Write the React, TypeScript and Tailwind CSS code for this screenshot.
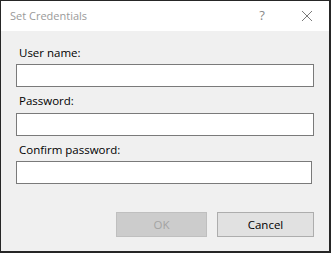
export default function App() {
  return (
    <div
      className="w-[331px] h-[253px] bg-[#f0f0f0] border-l border-t border-r-2 border-b-2 border-[#262626] flex flex-col text-[11.5px] text-black"
      style={{ fontFamily: '"Open Sans", "Noto Sans", sans-serif' }}
    >
      {/* Title bar */}
      <div className="h-[30px] bg-white flex items-center pl-[9px] shrink-0">
        <span className="text-[#9a9a9a] text-[11px] flex-1">Set Credentials</span>
        <span className="text-[#8a8a8a] text-[13px] w-[20px] text-center mr-[29px]">?</span>
        <svg width="12" height="12" viewBox="0 0 12 12" className="mr-[16px]">
          <path d="M1 1L11 11M11 1L1 11" stroke="#7a7a7a" strokeWidth="1" />
        </svg>
      </div>

      {/* Form */}
      <div className="flex flex-col px-[15px] pt-[14px]">
        <label className="pl-[3px] leading-[16px]">User name:</label>
        <input className="mt-[3px] h-[23px] w-[298px] bg-white border border-[#7a7a7a] outline-none" />

        <label className="pl-[3px] leading-[16px] mt-[6px]">Password:</label>
        <input type="password" className="mt-[4px] h-[23px] w-[298px] bg-white border border-[#7a7a7a] outline-none" />

        <label className="pl-[3px] leading-[16px] mt-[6px]">Confirm password:</label>
        <input type="password" className="mt-[3px] h-[23px] w-[296px] bg-white border border-[#7a7a7a] outline-none" />
      </div>

      {/* Buttons */}
      <div className="flex justify-end gap-[10px] pr-[15px] mt-[28px]">
        <button className="w-[91px] h-[25px] bg-[#cccccc] border border-[#bfbfbf] text-[#a3a3a3]">OK</button>
        <button className="w-[97px] h-[25px] bg-[#e1e1e1] border border-[#adadad]">Cancel</button>
      </div>
    </div>
  )
}
